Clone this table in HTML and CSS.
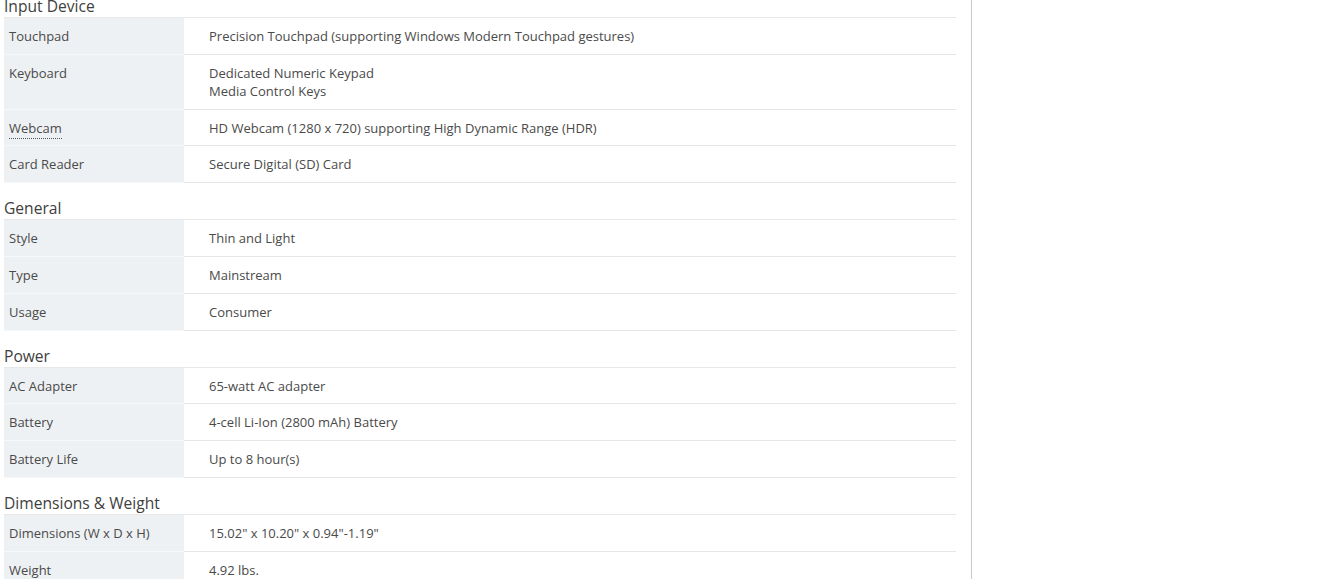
FILE: index.html
```html
<!DOCTYPE html>
<html lang="en">
<head>
<meta charset="utf-8">
<title>Specs</title>
<link rel="stylesheet" href="styles.css">
</head>
<body>
<div class="page">
  <section class="spec-group">
    <h2 class="spec-title">Input Device</h2>
    <div class="spec-row"><div class="spec-label">Touchpad</div><div class="spec-value">Precision Touchpad (supporting Windows Modern Touchpad gestures)</div></div>
    <div class="spec-row"><div class="spec-label">Keyboard</div><div class="spec-value">Dedicated Numeric Keypad<br>Media Control Keys</div></div>
    <div class="spec-row"><div class="spec-label"><abbr class="tip" title="Webcam">Webcam</abbr></div><div class="spec-value">HD Webcam (1280 x 720) supporting High Dynamic Range (HDR)</div></div>
    <div class="spec-row"><div class="spec-label">Card Reader</div><div class="spec-value">Secure Digital (SD) Card</div></div>
  </section>
  <section class="spec-group">
    <h2 class="spec-title">General</h2>
    <div class="spec-row"><div class="spec-label">Style</div><div class="spec-value">Thin and Light</div></div>
    <div class="spec-row"><div class="spec-label">Type</div><div class="spec-value">Mainstream</div></div>
    <div class="spec-row"><div class="spec-label">Usage</div><div class="spec-value">Consumer</div></div>
  </section>
  <section class="spec-group">
    <h2 class="spec-title">Power</h2>
    <div class="spec-row"><div class="spec-label">AC Adapter</div><div class="spec-value">65-watt AC adapter</div></div>
    <div class="spec-row"><div class="spec-label">Battery</div><div class="spec-value">4-cell Li-Ion (2800 mAh) Battery</div></div>
    <div class="spec-row"><div class="spec-label">Battery Life</div><div class="spec-value">Up to 8 hour(s)</div></div>
  </section>
  <section class="spec-group">
    <h2 class="spec-title">Dimensions &amp; Weight</h2>
    <div class="spec-row"><div class="spec-label">Dimensions (W x D x H)</div><div class="spec-value">15.02" x 10.20" x 0.94"-1.19"</div></div>
    <div class="spec-row"><div class="spec-label">Weight</div><div class="spec-value">4.92 lbs.</div></div>
  </section>
</div>
</body>
</html>
```
FILE: styles.css
```css
html, body {
  margin: 0;
  padding: 0;
  background: #fff;
  overflow: hidden;
}
body {
  font-family: "Open Sans", "Liberation Sans", sans-serif;
  color: #4a4a4a;
  height: 579px;
}
.page {
  display: flow-root;
  width: 952px;
  margin-top: -19px;
  padding: 0 15px 40px 4px;
  border-right: 1px solid #c9c9c9;
  min-height: 640px;
}
.spec-group {
  display: flex;
  flex-direction: column;
}
.spec-title {
  margin: 16px 0 0;
  padding: 1px 0 2px;
  font-size: 15.6px;
  font-weight: 400;
  line-height: 17px;
  color: #404040;
  border-bottom: 1px solid #e8e8e8;
}
.spec-row {
  display: flex;
  font-size: 13px;
  line-height: 18px;
}
.spec-label {
  flex: 0 0 180px;
  box-sizing: border-box;
  padding: 9px 5px 8.8px;
  background: #eef1f4;
  border-bottom: 1px solid #f6f7f8;
}
.spec-value {
  flex: 1;
  padding: 9px 0 8.8px 25px;
  border-bottom: 1px solid #e6e6e6;
}
.tip {
  text-decoration: none;
  border-bottom: 1px dotted #555;
  padding-bottom: 1px;
}
```
